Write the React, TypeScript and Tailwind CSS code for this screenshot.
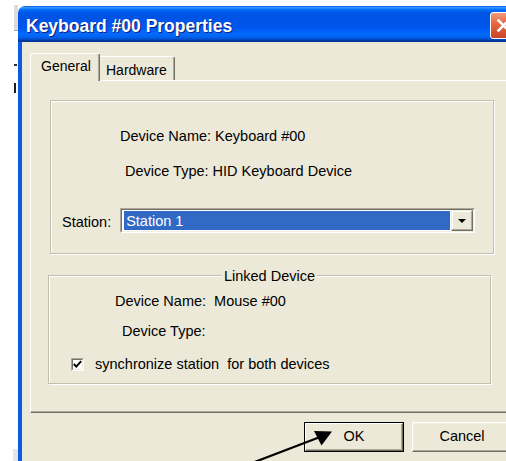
export default function App() {
  return (
    <div className="relative w-[506px] h-[461px] overflow-hidden bg-white flex font-['Liberation_Sans',Arial,sans-serif] text-black">
      {/* sliver of the desktop left of the dialog */}
      <div className="w-[18px] shrink-0 flex flex-col">
        <div className="ml-[14px] mt-[5px] w-[4px] h-[26px] bg-[#dcdcdc] border-b border-[#a8a8a8]" />
        <div className="ml-[14px] mt-[33px] w-[3px] h-[2px] bg-[#303030]" />
        <div className="ml-[14px] mt-[17px] w-[2px] h-[10px] bg-[#202020]" />
        <div className="mt-auto ml-[13px] w-[5px] h-[12px] bg-[#e6e6e6]" />
      </div>

      {/* dialog window */}
      <div className="w-[504px] shrink-0 mt-[6px] flex flex-col rounded-t-[7px] overflow-hidden">
        {/* title bar */}
        <div className="h-[36px] shrink-0 flex items-center pl-[8px] pr-[5px] bg-[linear-gradient(180deg,#0058ee_0%,#3593ff_4%,#288eff_6%,#127dff_8%,#036ffc_10%,#0262ee_14%,#0057e5_20%,#0054e3_24%,#0055eb_56%,#005bf5_66%,#026afe_76%,#0062ef_86%,#0052d6_92%,#0040ab_94%,#003092_100%)]">
          <span className="flex-1 pt-[3px] text-white font-bold text-[17.5px] leading-[20px] [text-shadow:1px_1px_0_#0a1e7a]">
            Keyboard #00 Properties
          </span>
          <div className="w-[27px] h-[27px] mt-[2px] rounded-[3px] border border-white bg-[linear-gradient(180deg,#f09a7a_0%,#e2663f_45%,#c9452a_100%)] flex items-center justify-center">
            <svg width="15" height="15" viewBox="0 0 15 15">
              <path d="M2.5 2.5 L12.5 12.5 M12.5 2.5 L2.5 12.5" stroke="white" strokeWidth="2.6" strokeLinecap="square" />
            </svg>
          </div>
        </div>

        {/* blue side frame around the client area */}
        <div className="flex-1 flex bg-[#0b5ae8] px-[4px]">
          <div className="flex-1 bg-[#ECE9D8] flex flex-col px-[8px] pt-[11px] text-[14.5px] leading-[17px]">
            {/* tabs */}
            <div className="h-[27px] flex items-end">
              <div className="relative z-10 w-[70px] h-[28px] -mb-[1px] bg-[#ECE9D8] border-t border-l border-white border-r border-r-[#716F64] rounded-t-[3px] shadow-[inset_-1px_0_0_#ACA899] pl-[10px] pt-[4px] text-[14px]">
                General
              </div>
              <div className="w-[75px] h-[24px] bg-[#ECE9D8] border-t border-white border-r border-r-[#716F64] rounded-tr-[3px] shadow-[inset_-1px_0_0_#ACA899] pl-[6px] pt-[5px] text-[14px]">
                Hardware
              </div>
            </div>

            {/* tab page */}
            <div className="h-[333px] shrink-0 flex flex-col border-t border-l border-white border-r border-b border-r-[#716F64] border-b-[#716F64] shadow-[inset_-1px_-1px_0_#ACA899]">
              {/* device group */}
              <div className="mt-[19px] ml-[19px] mr-[17px] h-[154px] border border-[#C2BFAF] shadow-[inset_1px_1px_0_#ffffff,1px_1px_0_#ffffff] flex flex-col">
                <div className="mt-[27px] ml-[69px]">Device Name: Keyboard #00</div>
                <div className="mt-[18px] ml-[74px]">Device Type: HID Keyboard Device</div>
                <div className="mt-[28px] ml-[11px] flex items-center">
                  <span className="pt-[3px]">Station:</span>
                  <div className="ml-[9px] w-[355px] h-[25px] border border-t-[#ACA899] border-l-[#ACA899] border-b-white border-r-white">
                    <div className="w-full h-full flex bg-white border border-t-[#716F64] border-l-[#716F64] border-b-[#F1EFE2] border-r-[#F1EFE2]">
                      <div className="flex-1 my-[1px] ml-[2px] mr-[1px] bg-[#316AC5] text-white pl-[2px] flex items-center pt-[2px]">
                        Station 1
                      </div>
                      <div className="w-[22px] h-full bg-[#ECE9D8] border border-t-[#F1EFE2] border-l-[#F1EFE2] border-b-[#716F64] border-r-[#716F64] shadow-[inset_-1px_-1px_0_#ACA899,inset_1px_1px_0_#ffffff] flex items-center justify-center">
                        <svg width="8" height="4" viewBox="0 0 8 4">
                          <path d="M0 0 H8 L4 4 Z" fill="black" />
                        </svg>
                      </div>
                    </div>
                  </div>
                </div>
              </div>

              {/* linked device group */}
              <div className="mt-[21px] ml-[17px] mr-[20px] h-[109px] border border-[#C2BFAF] shadow-[inset_1px_1px_0_#ffffff,1px_1px_0_#ffffff] flex flex-col">
                <div className="-mt-[9px] mx-auto w-fit px-[2px] bg-[#ECE9D8] pt-[1px]">Linked Device</div>
                <div className="mt-[8px] ml-[66px]">Device Name:&nbsp; Mouse #00</div>
                <div className="mt-[13px] ml-[73px]">Device Type:</div>
                <div className="mt-[15px] ml-[22px] flex items-center h-[17px]">
                  <div className="w-[13px] h-[13px] mt-[1px] border border-t-[#ACA899] border-l-[#ACA899] border-b-white border-r-white">
                    <div className="w-full h-full bg-white border border-t-[#716F64] border-l-[#716F64] border-b-[#F1EFE2] border-r-[#F1EFE2] flex items-center justify-center">
                      <svg width="9" height="9" viewBox="0 0 9 9">
                        <path d="M0.8 4 L3.3 6.6 L8.2 1.2" stroke="black" strokeWidth="2" fill="none" />
                      </svg>
                    </div>
                  </div>
                  <span className="ml-[11px] pt-[1px] whitespace-pre">synchronize station  for both devices</span>
                </div>
              </div>
            </div>

            {/* dialog buttons */}
            <div className="mt-[9px] ml-[274px] flex gap-[8px]">
              <div className="w-[100px] h-[30px] border border-black">
                <div className="w-full h-full border border-t-white border-l-white border-b-[#716F64] border-r-[#716F64] shadow-[inset_-1px_-1px_0_#ACA899] flex items-center justify-center pb-[2px]">
                  OK
                </div>
              </div>
              <div className="w-[100px] h-[30px] border border-t-white border-l-white border-b-[#716F64] border-r-[#716F64] shadow-[inset_-1px_-1px_0_#ACA899,inset_1px_1px_0_#F1EFE2] flex items-center justify-center pb-[2px]">
                Cancel
              </div>
            </div>
          </div>
        </div>
      </div>

      {/* pointer arrow toward the OK button */}
      <svg className="absolute left-0 top-0 pointer-events-none" width="506" height="461" viewBox="0 0 506 461">
        <line x1="252" y1="463" x2="320" y2="437" stroke="black" strokeWidth="2.2" />
        <polygon points="332,431.5 314,431 321.5,445.5" fill="black" />
      </svg>
    </div>
  );
}
